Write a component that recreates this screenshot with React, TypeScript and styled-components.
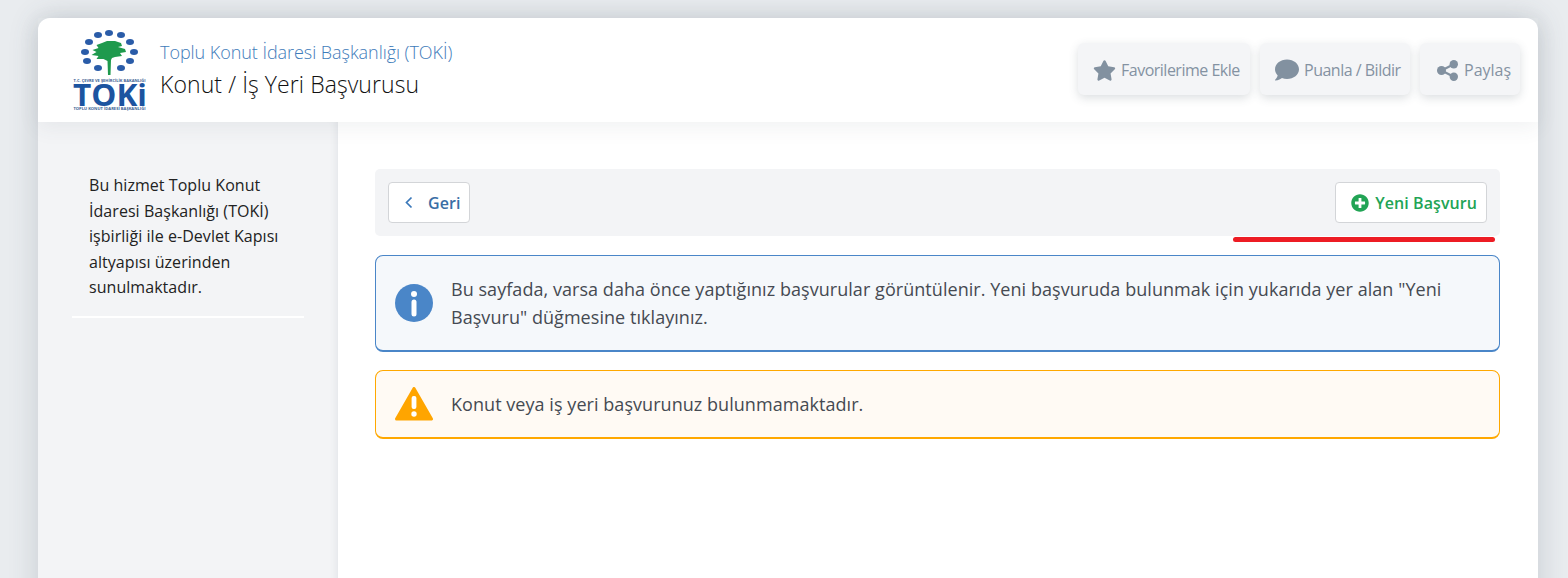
import React from "react";
import styled, { createGlobalStyle } from "styled-components";
import { FaStar, FaComment, FaPlusCircle } from "react-icons/fa";

const GlobalStyle = createGlobalStyle`
  html, body {
    margin: 0;
    height: 578px;
    overflow: hidden;
    background: #e9ecef;
    font-family: "Open Sans", "Liberation Sans", sans-serif;
    color: #333;
  }
`;

const Page = styled.div`
  padding: 18px 30px 0 38px;
  height: 560px;
  overflow: hidden;
`;

const Card = styled.div`
  height: 600px;
  background: #fff;
  border-radius: 12px 12px 0 0;
  box-shadow: 0 0 30px rgba(60, 75, 90, 0.2);
  display: flex;
  flex-direction: column;
`;

const Header = styled.header`
  height: 104px;
  flex: none;
  display: flex;
  align-items: center;
  justify-content: space-between;
  padding: 0 18px 0 33px;
  position: relative;
  z-index: 2;
  box-shadow: 0 5px 20px rgba(60, 75, 90, 0.08);
`;

const Brand = styled.div`
  display: flex;
  align-items: center;
  gap: 12px;
`;

const LogoMark = styled.svg`
  display: block;
  overflow: visible;
`;

const Titles = styled.div`
  display: flex;
  flex-direction: column;
  gap: 4px;
  padding-bottom: 3px;
`;

const Agency = styled.div`
  font-size: 18px;
  font-weight: 300;
  line-height: 26px;
  letter-spacing: -0.05px;
  color: #3f7cba;
`;

const ServiceName = styled.h1`
  margin: 0;
  font-size: 23px;
  font-weight: 300;
  line-height: 30px;
  letter-spacing: 0.08px;
  color: #111;
`;

const Actions = styled.div`
  display: flex;
  gap: 10px;
  margin-top: -2px;
`;

const ActionButton = styled.button<{ $width: number; $gap: number; $pad: number }>`
  width: ${({ $width }) => $width}px;
  height: 52px;
  border: 0;
  border-radius: 6px;
  background: #f4f5f7;
  box-shadow: 0 3px 10px rgba(60, 75, 90, 0.18);
  display: flex;
  align-items: center;
  gap: ${({ $gap }) => $gap}px;
  padding: 2px 0 0 ${({ $pad }) => $pad}px;
  font-family: inherit;
  font-size: 16px;
  letter-spacing: -0.5px;
  color: #8492a2;
  svg {
    color: #8291a0;
    flex: none;
  }
`;

const ShareLabel = styled.span`
  letter-spacing: 0;
`;

const Body = styled.div`
  flex: 1;
  display: flex;
`;

const Sidebar = styled.aside`
  width: 300px;
  flex: none;
  background: #f3f4f6;
  box-shadow: inset -8px 0 10px -8px rgba(60, 75, 90, 0.12);
  padding: 51px 34px 0;
  box-sizing: border-box;
`;

const SidebarNote = styled.p`
  margin: 0;
  padding: 0 16px 15px 17px;
  font-size: 16px;
  line-height: 25.5px;
  letter-spacing: 0.05px;
  color: #222;
  border-bottom: 2px solid #fff;
`;

const Main = styled.main`
  flex: 1;
  padding: 47px 38px 0 37px;
  display: flex;
  flex-direction: column;
  gap: 18px;
`;

const TopBar = styled.div`
  position: relative;
  height: 67px;
  background: #f3f4f6;
  border-radius: 5px;
  display: flex;
  align-items: center;
  justify-content: space-between;
  padding: 0 13px;
  margin-bottom: 1px;
`;

const BarButton = styled.button<{ $color: string }>`
  height: 41px;
  background: #fff;
  border: 1px solid #d3d5d8;
  border-radius: 4px;
  display: flex;
  align-items: center;
  font-family: inherit;
  font-size: 16px;
  font-weight: 600;
  letter-spacing: 0.08px;
  color: ${({ $color }) => $color};
  padding: 0 9px 0 15px;
  box-sizing: border-box;
`;

const BackButton = styled(BarButton)`
  padding-right: 8px;
`;

const BackIcon = styled.svg`
  margin-right: 14px;
`;

const PlusIcon = styled.span`
  display: flex;
  margin-right: 6px;
`;

const Underline = styled.div`
  position: absolute;
  left: 858px;
  right: 5px;
  top: 68px;
  height: 5px;
  border-radius: 3px;
  background: #ed1c24;
`;

const Notice = styled.div<{ $border: string; $bg: string }>`
  display: flex;
  align-items: center;
  gap: 18px;
  box-sizing: border-box;
  padding: 0 19px;
  border: 1px solid ${({ $border }) => $border};
  border-bottom-width: 2px;
  border-radius: 8px;
  background: ${({ $bg }) => $bg};
  font-size: 18px;
  line-height: 28px;
  letter-spacing: 0.05px;
  color: #454a52;
`;

const InfoNotice = styled(Notice)`
  height: 97px;
`;

const WarnNotice = styled(Notice)`
  height: 69px;
`;

const NoticeIcon = styled.svg`
  display: block;
  flex: none;
`;

const Logo = () => (
  <LogoMark width="77" height="82" viewBox="0 0 77 82">
    {[
      [38, 4], [50, 6], [59, 13], [63, 23], [59, 32], [50, 39], [27, 39], [16, 32], [14, 23], [18, 13], [27, 6],
    ].map(([cx, cy]) => (
      <ellipse key={`${cx}-${cy}`} cx={cx} cy={cy} rx="4" ry="3" fill="#2a5ca8" />
    ))}
    <path
      d="M31 14l5-2 8 0 6 2 1 3-4 1 7 2 1 3-6 1 2 3-7 1-3 1-1 2-0.5 15h-2.5l-0.5-14-4-2-7 0 2-3-7-1 5-3-4-2 6-2-2-3z"
      fill="#1f9a4d"
    />
    <text x="38.5" y="53" textAnchor="middle" fontSize="3.4" fontWeight="700" fill="#3c5f94" fontFamily="Open Sans" textLength="72" lengthAdjust="spacingAndGlyphs">
      T.C. ÇEVRE VE ŞEHİRCİLİK BAKANLIĞI
    </text>
    <text x="39" y="76.5" textAnchor="middle" fontSize="30" fontWeight="700" fill="#1c54a0" fontFamily="Open Sans" textLength="74" lengthAdjust="spacingAndGlyphs">
      TOKi
    </text>
    <text x="38.5" y="81" textAnchor="middle" fontSize="3.4" fontWeight="700" fill="#3c5f94" fontFamily="Open Sans" textLength="72" lengthAdjust="spacingAndGlyphs">
      TOPLU KONUT İDARESİ BAŞKANLIĞI
    </text>
  </LogoMark>
);

const ShareIcon = () => (
  <svg width="21" height="21" viewBox="0 0 21 21" fill="#8291a0">
    <circle cx="4.5" cy="10.5" r="4.5" />
    <circle cx="16.8" cy="4.2" r="4.2" />
    <circle cx="16.8" cy="16.8" r="4.2" />
    <path d="M4.5 10.5L16.8 4.2M4.5 10.5L16.8 16.8" stroke="#8291a0" strokeWidth="2.2" fill="none" />
  </svg>
);

export default function App() {
  return (
    <Page>
      <GlobalStyle />
      <Card>
        <Header>
          <Brand>
            <Logo />
            <Titles>
              <Agency>Toplu Konut İdaresi Başkanlığı (TOKİ)</Agency>
              <ServiceName>Konut / İş Yeri Başvurusu</ServiceName>
            </Titles>
          </Brand>
          <Actions>
            <ActionButton $width={172} $gap={5} $pad={15}>
              <FaStar size={23} />
              Favorilerime Ekle
            </ActionButton>
            <ActionButton $width={150} $gap={5} $pad={15}>
              <FaComment size={24} />
              Puanla / Bildir
            </ActionButton>
            <ActionButton $width={100} $gap={6} $pad={17}>
              <ShareIcon />
              <ShareLabel>Paylaş</ShareLabel>
            </ActionButton>
          </Actions>
        </Header>
        <Body>
          <Sidebar>
            <SidebarNote>
              Bu hizmet Toplu Konut İdaresi Başkanlığı (TOKİ) işbirliği ile e-Devlet Kapısı altyapısı üzerinden sunulmaktadır.
            </SidebarNote>
          </Sidebar>
          <Main>
            <TopBar>
              <BackButton $color="#3a6ea5">
                <BackIcon width="10" height="14" viewBox="0 0 10 14" fill="none">
                  <path d="M7.5 1.5L2.5 6.5L7.5 11.5" stroke="#3a78b9" strokeWidth="1.7" />
                </BackIcon>
                Geri
              </BackButton>
              <BarButton $color="#22a455">
                <PlusIcon>
                  <FaPlusCircle size={18} />
                </PlusIcon>
                Yeni Başvuru
              </BarButton>
              <Underline />
            </TopBar>
            <InfoNotice $border="#4a86c8" $bg="#f5f8fb">
              <NoticeIcon width="38" height="38" viewBox="0 0 38 38">
                <circle cx="19" cy="19" r="19" fill="#4a86c8" />
                <circle cx="19" cy="10" r="3" fill="#fff" />
                <rect x="16.5" y="15.5" width="5" height="17" rx="2.5" fill="#fff" />
              </NoticeIcon>
              <span>
                Bu sayfada, varsa daha önce yaptığınız başvurular görüntülenir. Yeni başvuruda bulunmak için yukarıda yer alan "Yeni Başvuru" düğmesine tıklayınız.
              </span>
            </InfoNotice>
            <WarnNotice $border="#ffa800" $bg="#fffaf4">
              <NoticeIcon width="38" height="34" viewBox="0 0 38 34">
                <path d="M19 1.5L36.5 32H1.5Z" fill="#ffa500" stroke="#ffa500" strokeWidth="3" strokeLinejoin="round" />
                <rect x="16.6" y="9" width="4.8" height="13" rx="2" fill="#fff" />
                <circle cx="19" cy="27" r="2.7" fill="#fff" />
              </NoticeIcon>
              <span>Konut veya iş yeri başvurunuz bulunmamaktadır.</span>
            </WarnNotice>
          </Main>
        </Body>
      </Card>
    </Page>
  );
}
